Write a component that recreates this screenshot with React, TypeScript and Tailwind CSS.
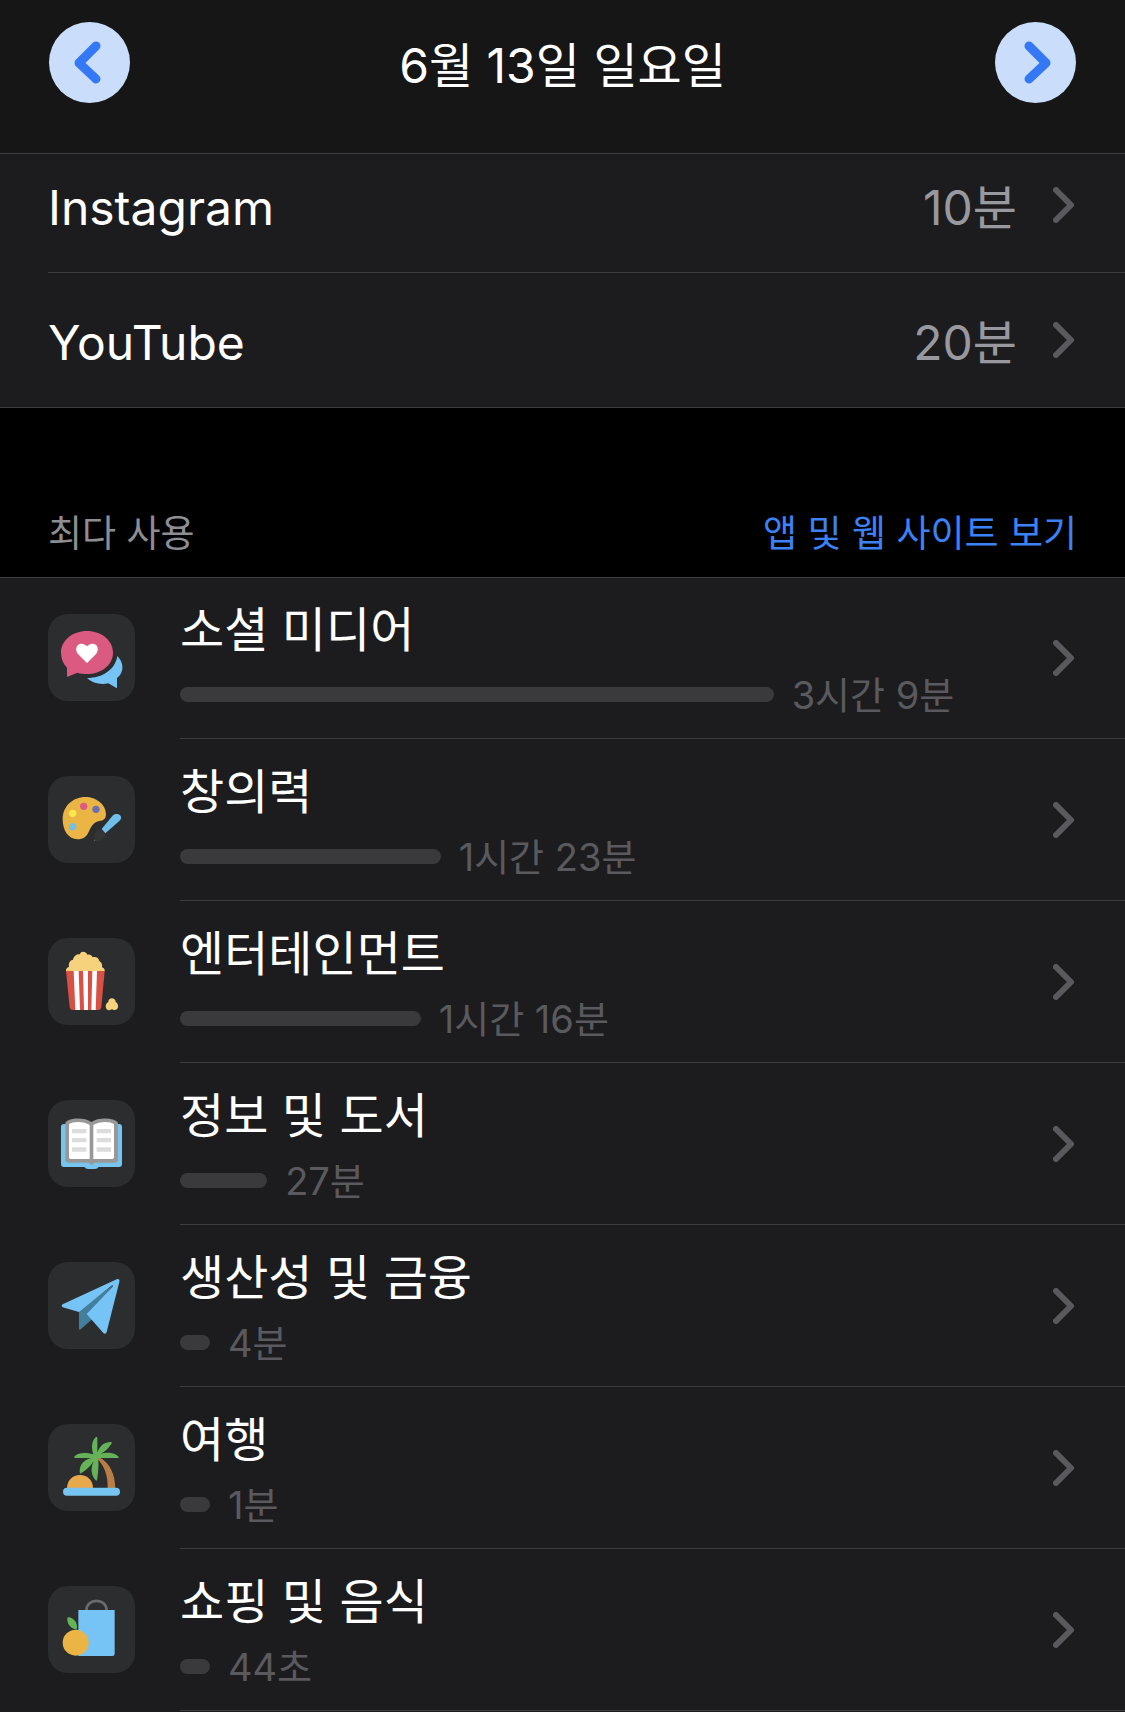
import type { ReactNode } from "react";

type Limit = { name: string; value: string };
type Category = { name: string; duration: string; seconds: number; icon: ReactNode };

const LONGEST_SECONDS = 11340;
const LONGEST_BAR_PERCENT = 68;

function SocialIcon() {
  return (
    <svg viewBox="24 27 261 261" className="size-full" aria-hidden="true">
      <path
        d="M141 78C184 78 219 106 219 143C219 180 184 207 141 207C131 207 121 206 112 203L83 215Q81 216 81 213V188C69 176 63 160 63 143C63 106 98 78 141 78Z"
        fill="#db5a82"
      />
      <path
        d="M141 174L114 147C107 139 107 128 113 121C121 114 133 115 141 124C149 115 161 114 169 121C175 128 175 139 168 147Z"
        fill="#fff"
      />
      <path
        d="M232 153C243 164 249 178 247 193C245 204 240 213 231 219V247Q231 250 228 248L205 235C182 240 156 234 141 219C187 219 226 194 232 153Z"
        fill="#76c4f5"
      />
    </svg>
  );
}

function PaletteIcon() {
  return (
    <svg viewBox="24 33 261 261" className="size-full" aria-hidden="true">
      <path
        d="M136 96C169 96 198 119 198 148C198 163 189 167 178 168C162 171 154 183 147 199C140 216 129 223 113 223C85 223 68 196 68 163C68 124 98 96 136 96Z"
        fill="#ebb545"
      />
      <circle cx="131" cy="124" r="11" fill="#db5a82" />
      <circle cx="168" cy="133" r="11" fill="#6b70b3" />
      <circle cx="98" cy="145" r="11" fill="#f8e84e" />
      <circle cx="98" cy="185" r="11" fill="#70c0e8" />
      <path
        d="M185 192L217 153C224 145 236 145 242 153C245 159 243 163 238 168L196 205Z"
        fill="#70bfea"
      />
      <path
        d="M183 194L196 207C196 221 185 229 163 228Q160 227 163 223C161 207 168 193 183 194Z"
        fill="#343434"
      />
      <circle cx="164" cy="226" r="2" fill="#6a6a6a" />
    </svg>
  );
}

function PopcornIcon() {
  return (
    <svg viewBox="24 33 261 261" className="size-full" aria-hidden="true">
      <path
        d="M78 133C77 126 81 121 87 119C85 108 90 99 99 98C101 87 110 81 119 82C123 72 137 72 142 83C149 81 156 85 158 91C167 88 176 92 178 102C185 106 188 114 186 121C193 123 195 128 194 133Z"
        fill="#f7d27c"
      />
      <path d="M78 132H194L184 240Q183 249 174 249H99Q90 249 89 240Z" fill="#d95145" />
      <path
        d="M101 132H116L120 249H106ZM129 132H144V249H132ZM157 132H171L167 249H154Z"
        fill="#fff"
      />
      <path
        d="M205 225C204 210 227 210 227 225C234 229 237 239 232 245C228 250 220 250 216 247C210 251 203 250 199 245C195 238 197 229 205 225Z"
        fill="#f7d27c"
      />
    </svg>
  );
}

function BookIcon() {
  return (
    <svg viewBox="24 30 261 261" className="size-full" aria-hidden="true">
      <path
        d="M72 102H237Q246 102 246 111V222Q246 231 237 231H176Q172 237 165 237H144Q137 237 133 231H72Q63 231 63 222V111Q63 102 72 102Z"
        fill="#76c4f0"
      />
      <path
        d="M76 98C84 83 133 80 154 96C176 80 225 83 234 98V208Q234 218 224 218H165Q160 218 158 223Q154 228 151 223Q149 218 144 218H86Q76 218 76 208Z"
        fill="#989898"
      />
      <path
        d="M87 102C100 93 134 94 149 105V207H92Q87 207 87 202ZM160 105C176 94 210 93 222 102V202Q222 207 217 207H160Z"
        fill="#fff"
      />
      <path
        d="M96 117H139V130H96ZM96 144H139V157H96ZM96 172H139V185H96ZM170 117H213V130H170ZM170 144H213V157H170ZM170 172H213V185H170Z"
        fill="#dcdcdc"
      />
    </svg>
  );
}

function PlaneIcon() {
  return (
    <svg viewBox="24 30 261 261" className="size-full" aria-hidden="true">
      <path d="M117 176L222 97L150 190L158 200L122 232Q117 235 117 229Z" fill="#437f9d" />
      <path
        d="M68 157L230 82Q240 79 238 90L200 240Q197 249 190 243L140 186L218 104Q221 98 214 101L117 180L68 166Q62 162 68 157Z"
        fill="#76c4f5"
      />
    </svg>
  );
}

function IslandIcon() {
  return (
    <svg viewBox="24 30 261 261" className="size-full" aria-hidden="true">
      <path d="M170 133L178 130C211 148 225 182 226 224H203C204 188 195 156 170 133Z" fill="#b97e48" />
      <path
        d="M168 69C171 68 172 70 172 74V115C181 94 193 84 212 84Q218 85 214 90C204 105 195 113 182 119C206 113 228 118 236 129Q238 132 233 132H174C177 148 175 176 171 199Q169 201 166 198C153 184 151 158 162 141C152 154 143 165 123 178Q119 179 119 173C119 149 134 137 153 132H106Q100 132 104 127C115 115 138 115 160 121C153 101 155 79 168 69Z"
        fill="#66b258"
      />
      <path d="M81 223C81 199 98 183 120 183C142 183 159 199 159 223Z" fill="#e8a84c" />
      <rect x="69" y="221" width="171" height="24" rx="12" fill="#76c4f0" />
    </svg>
  );
}

function ShoppingIcon() {
  return (
    <svg viewBox="24 30 261 261" className="size-full" aria-hidden="true">
      <path d="M139 104C139 65 200 65 200 104" fill="none" stroke="#6b6b6d" strokeWidth="8" />
      <path d="M115 102H224V233Q224 240 217 240H115Z" fill="#76c4f5" />
      <circle cx="107" cy="200" r="39" fill="#ebb545" />
      <path d="M110 161C92 158 80 143 82 126Q83 123 87 124C103 127 115 143 110 161Z" fill="#66b258" />
    </svg>
  );
}

const limits: Limit[] = [
  { name: "Instagram", value: "10분" },
  { name: "YouTube", value: "20분" },
];

const categories: Category[] = [
  { name: "소셜 미디어", duration: "3시간 9분", seconds: 11340, icon: <SocialIcon /> },
  { name: "창의력", duration: "1시간 23분", seconds: 4980, icon: <PaletteIcon /> },
  { name: "엔터테인먼트", duration: "1시간 16분", seconds: 4600, icon: <PopcornIcon /> },
  { name: "정보 및 도서", duration: "27분", seconds: 1665, icon: <BookIcon /> },
  { name: "생산성 및 금융", duration: "4분", seconds: 240, icon: <PlaneIcon /> },
  { name: "여행", duration: "1분", seconds: 60, icon: <IslandIcon /> },
  { name: "쇼핑 및 음식", duration: "44초", seconds: 44, icon: <ShoppingIcon /> },
];

function DayButton({ label, path }: { label: string; path: string }) {
  return (
    <button
      type="button"
      aria-label={label}
      className="size-[81px] shrink-0 rounded-full bg-[#cadefc] text-[#3478f6]"
    >
      <svg viewBox="0 0 81 81" className="size-full" fill="none" aria-hidden="true">
        <path d={path} stroke="currentColor" strokeWidth="9" strokeLinecap="round" strokeLinejoin="round" />
      </svg>
    </button>
  );
}

function Disclosure() {
  return (
    <svg viewBox="0 0 22 36" className="h-9 w-[22px] shrink-0 text-[#5a5a5e]" fill="none" aria-hidden="true">
      <path d="M3 3L18 18L3 33" stroke="currentColor" strokeWidth="6" strokeLinecap="round" strokeLinejoin="round" />
    </svg>
  );
}

function LimitRow({ name, value }: Limit) {
  return (
    <li className="group pl-12">
      <a
        href="#"
        className="flex h-[135px] items-center border-b border-[#3d3d40] pr-[50px] text-[48px] leading-[60px] group-last:h-[134px] group-last:border-b-0"
      >
        <span className="flex-1 pt-1.5">{name}</span>
        <span className="mr-9 pt-1.5 text-[#98989f]">{value}</span>
        <Disclosure />
      </a>
    </li>
  );
}

function CategoryRow({ name, duration, seconds, icon }: Category) {
  const width = `${(seconds / LONGEST_SECONDS) * LONGEST_BAR_PERCENT}%`;
  return (
    <li className="group">
      <a href="#" className="flex items-stretch pl-12">
        <span className="mr-[45px] flex shrink-0 items-center pb-0.5">
          <span className="size-[87px] rounded-[20px] bg-[#2c2d2f]">{icon}</span>
        </span>
        <span className="flex min-w-0 flex-1 items-center border-b border-[#3d3d40] py-5 pr-[50px] group-first:pt-[19px]">
          <span className="flex min-w-0 flex-1 flex-col gap-[7px]">
            <span className="text-[48px] leading-[66px]">{name}</span>
            <span className="flex items-center gap-[18px]">
              <span className="h-[15px] min-w-[30px] shrink-0 rounded-full bg-[#3a3a3c]" style={{ width }} />
              <span className="pt-0.5 text-[38px] leading-[46px] whitespace-nowrap text-[#5a5a5e]">{duration}</span>
            </span>
          </span>
          <Disclosure />
        </span>
      </a>
    </li>
  );
}

export default function App() {
  return (
    <div className="min-h-screen bg-[#1c1c1e] font-['Inter','Noto_Sans_CJK_KR',sans-serif] text-white">
      <header className="sticky top-0 z-10 flex items-center justify-between border-b border-[#3d3d40] bg-[#161616] px-[49px] pt-[22px] pb-[50px]">
        <DayButton label="이전 날" path="M47 24L30 41L47 57" />
        <h1 className="pt-1.5 text-[48px] leading-[60px]">6월 13일 일요일</h1>
        <DayButton label="다음 날" path="M34 24L51 41L34 57" />
      </header>
      <main>
        <ul className="-mt-4 border-b border-[#3d3d40]">
          {limits.map((limit) => (
            <LimitRow key={limit.name} {...limit} />
          ))}
        </ul>
        <section>
          <div className="flex items-end justify-between border-b border-[#3d3d40] bg-black px-12 pt-[102px] pb-[19px] text-[37px] leading-[48px]">
            <h2 className="text-[#8d8d93]">최다 사용</h2>
            <button type="button" className="text-[#3b82f7]">
              앱 및 웹 사이트 보기
            </button>
          </div>
          <ul>
            {categories.map((category) => (
              <CategoryRow key={category.name} {...category} />
            ))}
          </ul>
        </section>
      </main>
    </div>
  );
}
